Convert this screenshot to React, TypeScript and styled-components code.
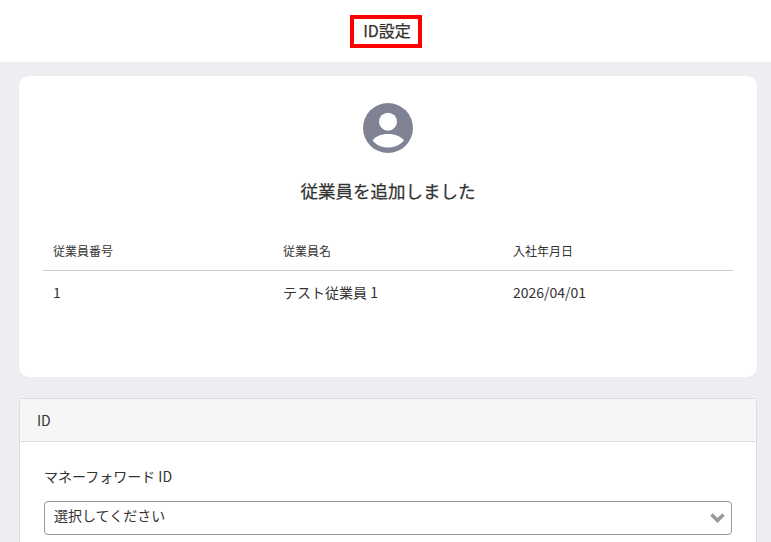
import React from "react";
import styled, { createGlobalStyle } from "styled-components";

const Global = createGlobalStyle`
  html, body { margin: 0; padding: 0; height: 542px; overflow: hidden; background: #edeef2; }
  body { font-family: "Noto Sans CJK JP", "Noto Sans", sans-serif; color: #333; }
`;
const Header = styled.header`
  height: 62px; background: #fff; display: flex; align-items: center; justify-content: center;
`;
const TitleBox = styled.h1`
  box-sizing: border-box; width: 72px; height: 33px; margin: 0 0 0 1px; padding: 0 0 3px 2px; border: 4px solid #f00;
  display: flex; align-items: center; justify-content: center;
  font-size: 16px; font-weight: 400; line-height: 1; color: #333;
  -webkit-text-stroke: 0.25px #333;
`;
const Main = styled.main`
  padding: 14px 14px 0 19px; display: flex; flex-direction: column; gap: 21px;
`;
const ResultCard = styled.section`
  height: 301px; box-sizing: border-box; background: #fff; border-radius: 10px; padding: 27px 24px 0;
  display: flex; flex-direction: column; align-items: center;
`;
const Heading = styled.h2`
  margin: 25px 0 0; font-size: 17.5px; line-height: 26px; font-weight: 400; color: #333;
  -webkit-text-stroke: 0.25px #333;
`;
const Table = styled.div`
  width: 690px; margin-top: 27px;
`;
const Row = styled.div<{ $head?: boolean }>`
  box-sizing: border-box;
  display: grid; grid-template-columns: repeat(3, 230px); align-items: center;
  height: ${p => (p.$head ? "40px" : "44px")};
  font-size: ${p => (p.$head ? "12px" : "14px")};
  ${p => p.$head && "border-bottom: 1px solid #ccc;"}
  ${p => !p.$head && "padding-bottom: 2px;"}
`;
const Cell = styled.div`
  padding-left: 10px; line-height: 20px;
`;
const IdCard = styled.section`
  box-sizing: border-box; background: #fff; border: 1px solid #dcdcdc; border-radius: 3px; height: 200px;
`;
const IdHead = styled.div`
  height: 43px; box-sizing: border-box; background: #f6f6f6; border-bottom: 1px solid #dcdcdc;
  padding-left: 17px; display: flex; align-items: center; font-size: 14px;
`;
const IdBody = styled.div`
  padding: 23px 24px 0;
`;
const Label = styled.div`
  font-size: 14px; line-height: 22px;
`;
const Select = styled.div`
  box-sizing: border-box; margin-top: 14px; height: 34px; border: 1px solid #999; border-radius: 4px;
  padding: 0 6px 6px 9px; display: flex; align-items: center; justify-content: space-between;
  font-size: 14px; background: #fff;
`;
const Chevron = styled.svg`
  margin-top: 6px;
`;

export default function App() {
  return (
    <>
      <Global />
      <Header><TitleBox>ID設定</TitleBox></Header>
      <Main>
        <ResultCard>
          <svg width="50" height="50" viewBox="0 0 50 50">
            <defs>
              <clipPath id="c"><circle cx="25" cy="25" r="25" /></clipPath>
            </defs>
            <circle cx="25" cy="25" r="25" fill="#7f8394" />
            <circle cx="25" cy="18.7" r="9" fill="#fff" />
            <path d="M9.7 37.5C12 33.500 18 31 25 31s13 2.500 16 6.500C37 42 31.500 44.600 25 44.600s-12-2.600-15.300-7.100z" fill="#fff" clipPath="url(#c)" />
          </svg>
          <Heading>従業員を追加しました</Heading>
          <Table>
            <Row $head><Cell>従業員番号</Cell><Cell>従業員名</Cell><Cell>入社年月日</Cell></Row>
            <Row><Cell>1</Cell><Cell>テスト従業員 1</Cell><Cell>2026/04/01</Cell></Row>
          </Table>
        </ResultCard>
        <IdCard>
          <IdHead>ID</IdHead>
          <IdBody>
            <Label>マネーフォワード ID</Label>
            <Select>
              選択してください
              <Chevron width="15" height="12" viewBox="0 0 15 12">
                <path d="M1.500 2.500L7.500 8.500l6-6" fill="none" stroke="#999" strokeWidth="3.500" />
              </Chevron>
            </Select>
          </IdBody>
        </IdCard>
      </Main>
    </>
  );
}
